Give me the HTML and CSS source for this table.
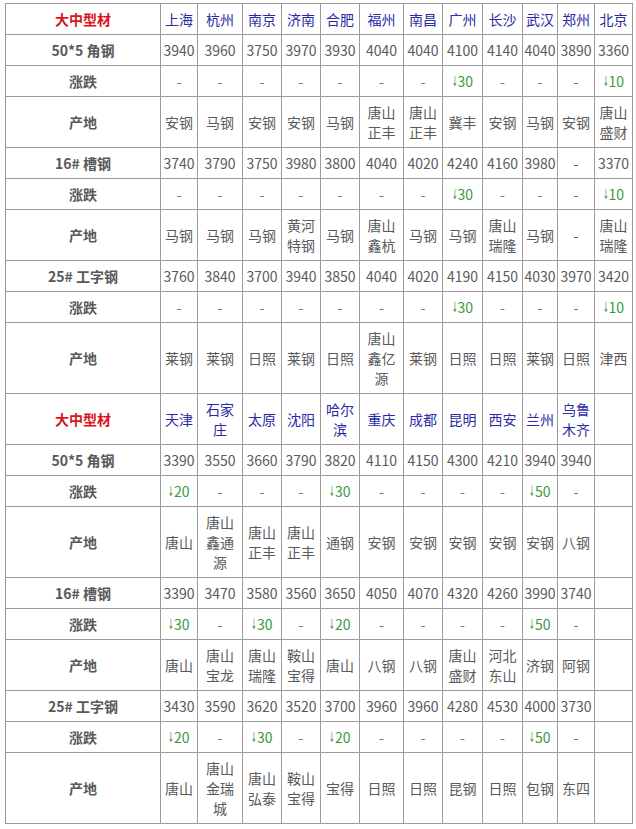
FILE: index.html
```html
<!DOCTYPE html>
<html lang="zh">
<head>
<meta charset="utf-8">
<title>大中型材价格</title>
<link rel="stylesheet" href="styles.css">
</head>
<body>
<table class="price">
<colgroup>
<col class="c0"><col class="c37"><col class="c45"><col class="c39"><col class="c39"><col class="c39"><col class="c44"><col class="c39"><col class="c40"><col class="c40"><col class="c35"><col class="c37"><col class="c38">
</colgroup>
<tbody>
<tr><td class="hd">大中型材</td><td class="city">上海</td><td class="city">杭州</td><td class="city">南京</td><td class="city">济南</td><td class="city">合肥</td><td class="city">福州</td><td class="city">南昌</td><td class="city">广州</td><td class="city">长沙</td><td class="city">武汉</td><td class="city">郑州</td><td class="city">北京</td></tr>
<tr><td class="lbl">50*5 角钢</td><td>3940</td><td>3960</td><td>3750</td><td>3970</td><td>3930</td><td>4040</td><td>4040</td><td>4100</td><td>4140</td><td>4040</td><td>3890</td><td>3360</td></tr>
<tr class="chg"><td class="lbl">涨跌</td><td>-</td><td>-</td><td>-</td><td>-</td><td>-</td><td>-</td><td>-</td><td><span class="arr">↓</span>30</td><td>-</td><td>-</td><td>-</td><td><span class="arr">↓</span>10</td></tr>
<tr><td class="lbl">产地</td><td>安钢</td><td>马钢</td><td>安钢</td><td>安钢</td><td>马钢</td><td>唐山<br>正丰</td><td>唐山<br>正丰</td><td>冀丰</td><td>安钢</td><td>马钢</td><td>安钢</td><td>唐山<br>盛财</td></tr>
<tr><td class="lbl">16# 槽钢</td><td>3740</td><td>3790</td><td>3750</td><td>3980</td><td>3800</td><td>4040</td><td>4020</td><td>4240</td><td>4160</td><td>3980</td><td>-</td><td>3370</td></tr>
<tr class="chg"><td class="lbl">涨跌</td><td>-</td><td>-</td><td>-</td><td>-</td><td>-</td><td>-</td><td>-</td><td><span class="arr">↓</span>30</td><td>-</td><td>-</td><td>-</td><td><span class="arr">↓</span>10</td></tr>
<tr><td class="lbl">产地</td><td>马钢</td><td>马钢</td><td>马钢</td><td>黄河<br>特钢</td><td>马钢</td><td>唐山<br>鑫杭</td><td>马钢</td><td>马钢</td><td>唐山<br>瑞隆</td><td>马钢</td><td>-</td><td>唐山<br>瑞隆</td></tr>
<tr><td class="lbl">25# 工字钢</td><td>3760</td><td>3840</td><td>3700</td><td>3940</td><td>3850</td><td>4040</td><td>4020</td><td>4190</td><td>4150</td><td>4030</td><td>3970</td><td>3420</td></tr>
<tr class="chg"><td class="lbl">涨跌</td><td>-</td><td>-</td><td>-</td><td>-</td><td>-</td><td>-</td><td>-</td><td><span class="arr">↓</span>30</td><td>-</td><td>-</td><td>-</td><td><span class="arr">↓</span>10</td></tr>
<tr><td class="lbl">产地</td><td>莱钢</td><td>莱钢</td><td>日照</td><td>莱钢</td><td>日照</td><td>唐山<br>鑫亿<br>源</td><td>莱钢</td><td>日照</td><td>日照</td><td>莱钢</td><td>日照</td><td>津西</td></tr>
<tr><td class="hd">大中型材</td><td class="city">天津</td><td class="city">石家<br>庄</td><td class="city">太原</td><td class="city">沈阳</td><td class="city">哈尔<br>滨</td><td class="city">重庆</td><td class="city">成都</td><td class="city">昆明</td><td class="city">西安</td><td class="city">兰州</td><td class="city">乌鲁<br>木齐</td><td></td></tr>
<tr><td class="lbl">50*5 角钢</td><td>3390</td><td>3550</td><td>3660</td><td>3790</td><td>3820</td><td>4110</td><td>4150</td><td>4300</td><td>4210</td><td>3940</td><td>3940</td><td></td></tr>
<tr class="chg"><td class="lbl">涨跌</td><td><span class="arr">↓</span>20</td><td>-</td><td>-</td><td>-</td><td><span class="arr">↓</span>30</td><td>-</td><td>-</td><td>-</td><td>-</td><td><span class="arr">↓</span>50</td><td>-</td><td></td></tr>
<tr><td class="lbl">产地</td><td>唐山</td><td>唐山<br>鑫通<br>源</td><td>唐山<br>正丰</td><td>唐山<br>正丰</td><td>通钢</td><td>安钢</td><td>安钢</td><td>安钢</td><td>安钢</td><td>安钢</td><td>八钢</td><td></td></tr>
<tr><td class="lbl">16# 槽钢</td><td>3390</td><td>3470</td><td>3580</td><td>3560</td><td>3650</td><td>4050</td><td>4070</td><td>4320</td><td>4260</td><td>3990</td><td>3740</td><td></td></tr>
<tr class="chg"><td class="lbl">涨跌</td><td><span class="arr">↓</span>30</td><td>-</td><td><span class="arr">↓</span>30</td><td>-</td><td><span class="arr">↓</span>20</td><td>-</td><td>-</td><td>-</td><td>-</td><td><span class="arr">↓</span>50</td><td>-</td><td></td></tr>
<tr><td class="lbl">产地</td><td>唐山</td><td>唐山<br>宝龙</td><td>唐山<br>瑞隆</td><td>鞍山<br>宝得</td><td>唐山</td><td>八钢</td><td>八钢</td><td>唐山<br>盛财</td><td>河北<br>东山</td><td>济钢</td><td>阿钢</td><td></td></tr>
<tr><td class="lbl">25# 工字钢</td><td>3430</td><td>3590</td><td>3620</td><td>3520</td><td>3700</td><td>3960</td><td>3960</td><td>4280</td><td>4530</td><td>4000</td><td>3730</td><td></td></tr>
<tr class="chg"><td class="lbl">涨跌</td><td><span class="arr">↓</span>20</td><td>-</td><td><span class="arr">↓</span>30</td><td>-</td><td><span class="arr">↓</span>20</td><td>-</td><td>-</td><td>-</td><td>-</td><td><span class="arr">↓</span>50</td><td>-</td><td></td></tr>
<tr><td class="lbl">产地</td><td>唐山</td><td>唐山<br>金瑞<br>城</td><td>唐山<br>弘泰</td><td>鞍山<br>宝得</td><td>宝得</td><td>日照</td><td>日照</td><td>昆钢</td><td>日照</td><td>包钢</td><td>东四</td><td></td></tr>
</tbody>
</table>
</body>
</html>
```
FILE: styles.css
```css
html, body {
  background: #ffffff;
}
body {
  margin: 0;
  padding: 3px 0 0 5px;
  font-family: "Noto Sans CJK SC", "Noto Sans", sans-serif;
  font-size: 14px;
  color: #5a5a5a;
}
.price {
  border-collapse: collapse;
  table-layout: fixed;
  width: 627px;
  border: 1px solid #6a6a6a;
}
.c0 { width: 155px; }
.c35 { width: 35px; }
.c37 { width: 37px; }
.c38 { width: 38px; }
.c39 { width: 39px; }
.c40 { width: 40px; }
.c44 { width: 44px; }
.c45 { width: 45px; }
.price td {
  border: 1px solid #9a9a9a;
  padding: 5px 0;
  height: 20px;
  line-height: 20px;
  text-align: center;
  vertical-align: middle;
  white-space: nowrap;
}
.price td.hd {
  color: #d9141e;
  font-weight: bold;
}
.price td.city {
  color: #2a2aa6;
}
.price td.lbl {
  font-weight: bold;
  color: #595959;
}
.chg td {
  color: #3a9a3a;
}
.arr {
  display: inline-block;
  height: 20px;
  line-height: 20px;
  vertical-align: top;
  font-family: "DejaVu Sans", sans-serif;
  font-size: 14px;
  transform: scaleX(0.5);
  margin: 0 -3px 0 -3px;
}
```
